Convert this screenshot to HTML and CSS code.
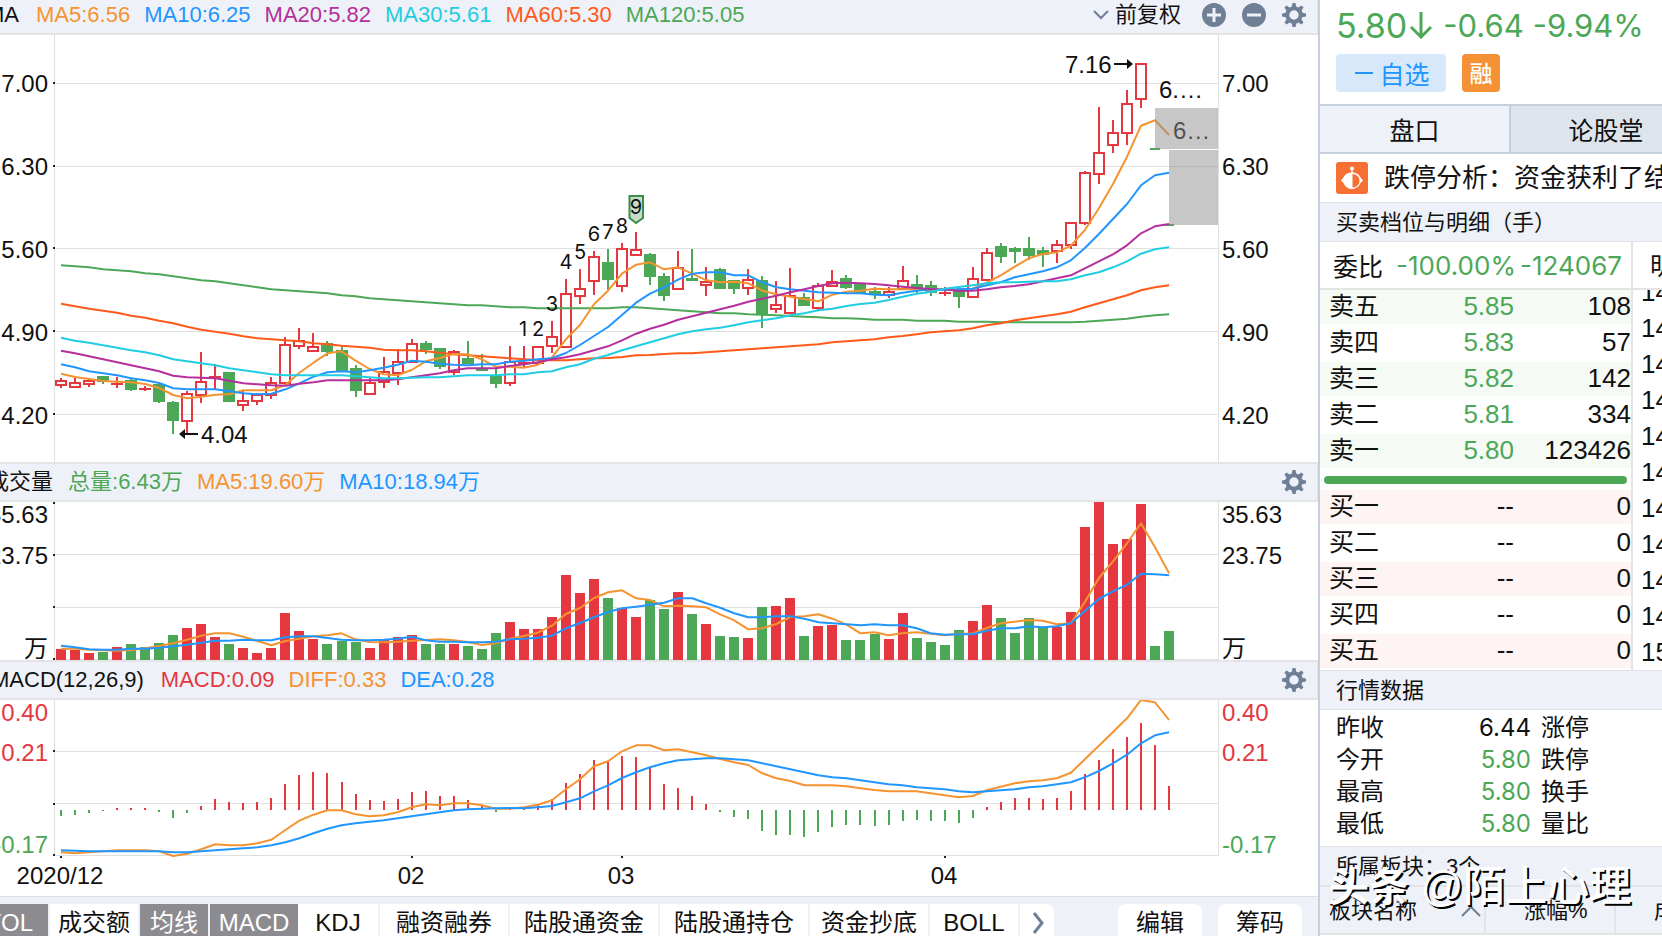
FILE: index.html
```html
<!DOCTYPE html>
<html lang="zh-CN">
<head>
<meta charset="utf-8">
<title>5.80 -9.94% 行情</title>
<link rel="stylesheet" href="styles.css">
</head>
<body>
<svg class="defs" aria-hidden="true">
  <symbol id="gear" viewBox="-12 -12 24 24">
    <circle r="6.7" fill="none" stroke="#6e7f96" stroke-width="4"/>
    <g fill="#6e7f96">
      <path id="tooth" d="M-2.3-8L-1.5-12H1.5L2.3-8Z"/>
      <use href="#tooth" transform="rotate(45)"/>
      <use href="#tooth" transform="rotate(90)"/>
      <use href="#tooth" transform="rotate(135)"/>
      <use href="#tooth" transform="rotate(180)"/>
      <use href="#tooth" transform="rotate(225)"/>
      <use href="#tooth" transform="rotate(270)"/>
      <use href="#tooth" transform="rotate(315)"/>
    </g>
  </symbol>
</svg>
<div class="app">
  <main class="charts">
    <header class="bar bar-top">
      <span class="name name-ma">MA</span>
      <span class="orange">MA5:6.56</span>
      <span class="blue">MA10:6.25</span>
      <span class="purple">MA20:5.82</span>
      <span class="cyan">MA30:5.61</span>
      <span class="deep">MA60:5.30</span>
      <span class="green">MA120:5.05</span>
      <div class="tools">
        <button class="adjust" type="button">
          <svg width="18" height="12" viewBox="0 0 18 12"><path d="M2 2L9 9L16 2" fill="none" stroke="#6e7f96" stroke-width="2"/></svg>
          <span>前复权</span>
        </button>
        <button type="button" aria-label="放大"><svg width="24" height="24" viewBox="0 0 24 24"><circle cx="12" cy="12" r="12" fill="#6e7f96"/><path d="M5 12H19M12 5V19" stroke="#eef1f7" stroke-width="3"/></svg></button>
        <button type="button" aria-label="缩小"><svg width="24" height="24" viewBox="0 0 24 24"><circle cx="12" cy="12" r="12" fill="#6e7f96"/><path d="M5 12H19" stroke="#eef1f7" stroke-width="3"/></svg></button>
        <button type="button" aria-label="设置"><svg width="24" height="24"><use href="#gear"/></svg></button>
      </div>
    </header>

    <svg class="plot" viewBox="0 35 1318 427">
      <path class="grid" d="M54 83.5H1218M54 166.5H1218M54 248.5H1218M54 331.5H1218M54 414.5H1218M54.5 35V462M1218.5 35V462"/>
      <path class="tick" d="M53 83H55M53 166H55M53 248H55M53 331H55M53 414H55"/>
      <g class="axis end"><text x="48" y="92">7.00</text><text x="48" y="175">6.30</text><text x="48" y="258">5.60</text><text x="48" y="341">4.90</text><text x="48" y="424">4.20</text></g>
      <g class="axis"><text x="1222" y="92">7.00</text><text x="1222" y="175">6.30</text><text x="1222" y="258">5.60</text><text x="1222" y="341">4.90</text><text x="1222" y="424">4.20</text></g>
      <g id="candles"></g>
      <g id="averages"></g>
      <path class="badge" d="M629.500 196H643V218L636 223L629.500 218Z"/>
      <g class="count">
        <text x="523" y="336">1</text><text x="538" y="336">2</text><text x="552" y="311">3</text><text x="566" y="269">4</text><text x="580" y="259">5</text><text x="594" y="241">6</text><text x="608" y="239">7</text><text x="622" y="233">8</text><text x="636" y="214">9</text>
      </g>
      <g class="axis">
        <text x="201" y="443">4.04</text><text x="1065" y="73">7.16</text>
        <text x="1159" y="98">6.…</text><text x="1173" y="139">6…</text>
      </g>
      <path d="M198 434H184M1114 64H1128" stroke="#111" stroke-width="2"/>
      <path d="M179 434L185 429V439ZM1133 64L1127 59V69Z" fill="#111"/>
      <path class="gap" d="M1155 108H1218V149H1155ZM1169 150H1218V225H1169Z"/>
    </svg>

    <header class="bar">
      <span class="name name-vol">成交量</span>
      <span class="green">总量:6.43万</span>
      <span class="orange">MA5:19.60万</span>
      <span class="blue">MA10:18.94万</span>
      <div class="tools"><button type="button" aria-label="设置"><svg width="24" height="24"><use href="#gear"/></svg></button></div>
    </header>

    <svg class="plot" viewBox="0 502 1318 158">
      <path class="grid" d="M54 554.5H1218M54 607.5H1218M54 659.5H1218M54.5 502V660M1218.5 502V660"/>
      <path class="tick" d="M53 503H55M53 555H55M53 607H55M53 659H55"/>
      <g class="axis end"><text x="48" y="523">35.63</text><text x="48" y="564">23.75</text><text x="48" y="657">万</text></g>
      <g class="axis"><text x="1222" y="523">35.63</text><text x="1222" y="564">23.75</text><text x="1222" y="657">万</text></g>
      <g id="volume"></g>
    </svg>

    <header class="bar">
      <span class="name name-macd">MACD(12,26,9)</span>
      <span class="red">MACD:0.09</span>
      <span class="orange">DIFF:0.33</span>
      <span class="blue">DEA:0.28</span>
      <div class="tools"><button type="button" aria-label="设置"><svg width="24" height="24"><use href="#gear"/></svg></button></div>
    </header>

    <svg class="plot" viewBox="0 700 1318 196">
      <path class="grid" d="M54 751.5H1218M54 803.5H1218M54 855.5H1218M54.5 700V856M1218.5 700V856"/>
      <path class="tick" d="M53 751H55M53 804H55M53 855H55M60 857H62M411 857H413M621 857H623M944 857H946"/>
      <g class="axis end up"><text x="48" y="721">0.40</text><text x="48" y="761">0.21</text></g>
      <g class="axis up"><text x="1222" y="721">0.40</text><text x="1222" y="761">0.21</text></g>
      <g class="axis down"><text x="48" y="853" class="end">-0.17</text><text x="1222" y="853">-0.17</text></g>
      <g id="macd"></g>
      <g class="axis mid"><text x="60" y="884">2020/12</text><text x="411" y="884">02</text><text x="621" y="884">03</text><text x="944" y="884">04</text></g>
    </svg>

    <nav class="indicators">
      <button type="button" class="on w-vol">VOL</button>
      <button type="button" class="w-88">成交额</button>
      <button type="button" class="on w-68">均线</button>
      <button type="button" class="on w-88">MACD</button>
      <button type="button" class="w-80 joined">KDJ</button>
      <button type="button" class="w-128">融资融券</button>
      <button type="button" class="w-148">陆股通资金</button>
      <button type="button" class="w-148">陆股通持仓</button>
      <button type="button" class="w-118">资金抄底</button>
      <button type="button" class="w-88">BOLL</button>
      <button type="button" class="more" aria-label="更多"><svg width="12" height="24" viewBox="0 0 12 24"><path d="M2 2L10 12L2 22" fill="none" stroke="#6e7f96" stroke-width="3"/></svg></button>
      <button type="button" class="pill push">编辑</button>
      <button type="button" class="pill">筹码</button>
    </nav>
  </main>

  <aside class="quote">
    <section class="price">
      <div class="figures">
        <strong>5.80</strong>
        <svg width="24" height="28" viewBox="0 0 24 28"><path d="M12 1V26M2 16L12 26L22 16" fill="none" stroke="#4ca757" stroke-width="3"/></svg>
        <span class="change">-0.64</span>
        <span>-9.94%</span>
      </div>
      <div class="tags">
        <button type="button" class="watch"><svg width="18" height="4"><path d="M0 2H18" stroke="#2196ff" stroke-width="2"/></svg>自选</button>
        <span class="margin">融</span>
      </div>
    </section>
    <div class="tabs">
      <button type="button" class="active">盘口</button>
      <button type="button">论股堂</button>
    </div>
    <a class="news" href="#news">
      <svg width="32" height="32" viewBox="0 0 32 32"><rect width="32" height="32" rx="3" fill="#f66f33"/><circle cx="16" cy="6.500" r="2" fill="#fff"/><path d="M16 7V12" stroke="#fff" stroke-width="1.500"/><path d="M16 10.500C20 10.500 23 12 24.500 15.500L27 18.500L24.500 21C23 24.500 20 27 16 27C12 27 9 24.500 7.500 21L5 18.500L7.500 15.500C9 12 12 10.500 16 10.500Z" fill="#fff"/><path d="M16.500 12C20.500 12 23.500 15 23.500 18.700C23.500 22.500 20.500 25.500 16.500 25.500Z" fill="#f66f33"/></svg>
      <span>跌停分析：资金获利了结</span>
    </a>
    <h2>买卖档位与明细（手）</h2>
    <div class="book">
      <div class="depth">
        <div class="ratio"><span>委比</span><b>-100.00%</b><b>-124067</b></div>
        <table class="asks">
          <tr><th>卖五</th><td>5.85</td><td>108</td></tr>
          <tr><th>卖四</th><td>5.83</td><td>57</td></tr>
          <tr><th>卖三</th><td>5.82</td><td>142</td></tr>
          <tr><th>卖二</th><td>5.81</td><td>334</td></tr>
          <tr><th>卖一</th><td>5.80</td><td>123426</td></tr>
        </table>
        <div class="balance"></div>
        <table class="bids">
          <tr><th>买一</th><td>--</td><td>0</td></tr>
          <tr><th>买二</th><td>--</td><td>0</td></tr>
          <tr><th>买三</th><td>--</td><td>0</td></tr>
          <tr><th>买四</th><td>--</td><td>0</td></tr>
          <tr><th>买五</th><td>--</td><td>0</td></tr>
        </table>
      </div>
      <div class="deals">
        <div class="deals-head">明</div>
        <ol><li>14</li><li>14</li><li>14</li><li>14</li><li>14</li><li>14</li><li>14</li><li>14</li><li>14</li><li>14</li><li>15</li></ol>
      </div>
    </div>
    <h2>行情数据</h2>
    <dl class="stats">
      <dt>昨收</dt><dd class="flat">6.44</dd><dt>涨停</dt>
      <dt>今开</dt><dd>5.80</dd><dt>跌停</dt>
      <dt>最高</dt><dd>5.80</dd><dt>换手</dt>
      <dt>最低</dt><dd>5.80</dd><dt>量比</dt>
    </dl>
    <div class="sector">
      <h2>所属板块：3个</h2>
      <div class="columns">
        <span class="col-name">板块名称<svg width="20" height="12" viewBox="0 0 20 12"><path d="M1 11L10 2L19 11" fill="none" stroke="#6e7f96" stroke-width="2"/></svg></span>
        <span class="col-pct">涨幅%</span>
        <span class="col-last">成</span>
      </div>
      <div class="watermark"><b>头条</b> @陌上心理</div>
    </div>
  </aside>
</div>
<script src="chart.js"></script>
</body>
</html>
```

FILE: styles.css
```css
* { box-sizing: border-box; }

body {
  margin: 0;
  height: 100vh;
  overflow: hidden;
  background: #fff;
  color: #111;
  font-family: "Liberation Sans", "Noto Sans CJK SC", sans-serif;
  font-size: 22px;
}

button {
  margin: 0;
  padding: 0;
  border: 0;
  background: none;
  color: inherit;
  font: inherit;
  white-space: nowrap;
}

svg { display: block; }
.defs { position: absolute; width: 0; height: 0; }

.app {
  display: grid;
  grid-template-columns: minmax(0, 1fr) 342px;
  height: 100%;
}

.charts { min-width: 0; border-right: 2px solid #c6d0dc; overflow: hidden; }

/* Indicator header bars */
.bar {
  display: flex;
  align-items: center;
  gap: 14px;
  height: 40px;
  background: #eef1f7;
  border-top: 2px solid #e4e4e6;
  border-bottom: 2px solid #e4e4e6;
  border-right: 1px solid #e4e4e6;
  line-height: 32px;
  white-space: nowrap;
}
.bar-top { margin-top: -5px; }
.name { margin-right: 3px; }
.name-ma { margin-left: -14px; }
.bar .name-vol { margin-left: -13px; margin-right: 1px; }
.name-macd { margin-left: -9px; }
.tools { display: flex; align-items: center; gap: 16px; margin-left: auto; padding-right: 11px; }
.adjust { display: flex; align-items: center; gap: 5px; margin-right: 5px; }
.adjust span { line-height: 28px; }

.orange { color: #f59331; }
.blue { color: #2196ff; }
.purple { color: #b5309c; }
.cyan { color: #20cde2; }
.deep { color: #ff5a1a; }
.green { color: #4ca757; }
.red { color: #e4373f; }

/* Plots */
.plot { width: 100%; height: auto; }
.grid { stroke: #e0e0e0; fill: none; }
.tick { stroke: #222; stroke-width: 2; }
.axis { font-size: 24px; fill: #111; }
.end { text-anchor: end; }
.mid { text-anchor: middle; }
.up { fill: #e4373f; }
.down { fill: #4ca757; }
.count { font: 20px Inter, sans-serif; text-anchor: middle; fill: #111; }
.badge { fill: #c5dccb; stroke: #3b8f4b; stroke-width: 2; }
.gap { fill: #909090; fill-opacity: .5; }
.line { fill: none; stroke-width: 2; stroke-linejoin: round; }

/* Indicator switcher */
.indicators {
  display: flex;
  gap: 2px;
  height: 60px;
  padding: 7px 16px 0 0;
  background: #eef1f7;
  border-top: 1px solid #dcdfe4;
  font-size: 24px;
}
.indicators button { flex: none; height: 38px; background: #fff; line-height: 38px; }
.indicators .on { background: #8c8c90; color: #fff; }
.indicators .w-vol { width: 88px; margin-left: -40px; padding-left: 10px; }
.indicators .joined { margin-left: -2px; }
.w-68 { width: 68px; }
.w-80 { width: 80px; }
.w-88 { width: 88px; }
.w-118 { width: 118px; }
.w-128 { width: 128px; }
.w-148 { width: 148px; }
.indicators .more { width: 34px; padding-left: 12px; border-radius: 0 8px 8px 0; }
.indicators .pill { width: 84px; border-radius: 8px; }
.indicators .push { margin-left: auto; margin-right: 14px; }

/* Quote panel */
.quote { min-width: 0; overflow: hidden; }
.price { height: 106px; padding: 4px 0 0 16px; border-bottom: 2px solid #c6d0dc; font-family: Inter, sans-serif; }
.figures { display: flex; align-items: center; height: 42px; color: #4ca757; font-size: 31px; white-space: nowrap; }
.figures strong { font-size: 34px; font-weight: 400; }
.figures svg { margin-left: 2px; margin-right: 10px; }
.change { margin-right: 9px; }
.tags { display: flex; gap: 16px; padding-top: 8px; }
.watch {
  display: flex;
  align-items: center;
  justify-content: center;
  gap: 6px;
  width: 110px;
  height: 38px;
  padding-left: 3px;
  border-radius: 4px;
  background: #d7e8fb;
  color: #2196ff;
  font-family: "Noto Sans CJK SC", sans-serif;
  font-size: 25px;
  line-height: 38px;
}
.margin {
  width: 38px;
  height: 38px;
  border-radius: 4px;
  background: #f59236;
  color: #fff;
  font: 500 23px/36px "Noto Sans CJK SC", sans-serif;
  text-align: center;
}

.tabs { display: grid; grid-template-columns: 191px 190px; height: 48px; border-bottom: 2px solid #c6d0dc; }
.tabs button { background: #dde4ec; font-size: 25px; }
.tabs .active { background: #eef1f7; border-right: 2px solid #c6d0dc; }

.news { display: flex; align-items: center; gap: 16px; height: 48px; padding-left: 16px; color: #111; font-size: 26px; line-height: 36px; text-decoration: none; white-space: nowrap; }
.news svg { flex: none; }

h2 {
  margin: 0;
  height: 40px;
  padding-left: 16px;
  background: #eef1f7;
  border-top: 1px solid #dfe2e6;
  border-bottom: 1px solid #dfe2e6;
  font-size: 22px;
  font-weight: 400;
  line-height: 40px;
}

.book { display: grid; grid-template-columns: 313px 1fr; }
.depth { border-right: 2px solid #e4e4e6; }
.ratio {
  display: flex;
  align-items: center;
  justify-content: space-between;
  height: 48px;
  padding: 0 9px 0 13px;
  border-bottom: 2px solid #e4e4e6;
  font-size: 25px;
}
.ratio b { color: #4ca757; font-family: Inter, sans-serif; font-size: 26px; font-weight: 400; }
.ratio span { margin-right: 9px; }

.book table { width: 100%; border-collapse: collapse; table-layout: fixed; font-size: 26px; }
.book tr { height: 36px; }
.book th, .book td { padding: 0 0 4px; line-height: 32px; text-align: right; font-weight: 400; }
.book th { width: 90px; padding-left: 9px; text-align: left; font-size: 25px; }
.book td:nth-child(2) { width: 104px; }
.book td:last-child { padding-right: 0; }
.asks td:nth-child(2) { color: #4ca757; }
.asks tr:nth-child(odd) { background: linear-gradient(#f5faf5 34px, #fff 34px); }
.bids tr:nth-child(odd) { background: linear-gradient(#fef4f3 34px, #fff 34px); }
.balance { height: 8px; margin: 6px 4px; border-radius: 4px; background: #4ca757; }

.deals { overflow: hidden; }
.deals-head { height: 48px; padding-left: 17px; border-bottom: 2px solid #e4e4e6; font-size: 25px; line-height: 48px; }
.deals ol { height: 380px; margin: 0; padding: 0 0 0 8px; overflow: hidden; list-style: none; font-size: 26px; }
.deals li { height: 36px; line-height: 36px; }
.deals li:first-child { height: 20px; line-height: 4px; }

.stats {
  display: grid;
  grid-template-columns: 110px 75px 1fr;
  column-gap: 10px;
  margin: 0;
  padding: 2px 0 6px 16px;
  font-size: 24px;
  line-height: 32px;
}
.stats dd { margin: 0; color: #4ca757; font-family: Inter, sans-serif; font-size: 24px; text-align: right; }
.stats .flat { color: #111; }

.sector { position: relative; }
.columns { display: grid; grid-template-columns: 166px 130px 60px; height: 49px; border-top: 1px solid #e4e4e6; border-bottom: 2px solid #e4e4e6; background: #eef1f7; line-height: 48px; }
.columns span { border-right: 2px solid #e4e4e6; white-space: nowrap; }
.col-name { display: flex; align-items: center; justify-content: space-between; padding: 0 3px 0 9px; }
.col-pct { padding-left: 38px; }
.col-last { padding-left: 38px; }
.watermark {
  position: absolute;
  left: 9px;
  top: 13px;
  color: #fff;
  font-size: 42px;
  font-weight: 500;
  line-height: 56px;
  text-shadow: 2px 2px 0 #000;
  white-space: nowrap;
}
.watermark b { font-size: 40px; font-weight: 700; }
```

FILE: chart.js
```js
// Vertical values are stored in thirds of a drawing unit.
const UNIT = 3;
const FIRST = 61;
const STEP = 14.026;
const RED = '#e4373f';
const GREEN = '#4ca757';
const NS = 'http://www.w3.org/2000/svg';

const at = i => FIRST + i * STEP;
const list = s => s.trim().split(/\s+/).map(Number);

function add(parent, tag, attrs) {
  const el = document.createElementNS(NS, tag);
  for (const k in attrs) el.setAttribute(k, attrs[k]);
  parent.appendChild(el);
}
function line(parent, color, ys, base) {
  const points = list(ys).map((y, i) => at(i).toFixed(1) + ',' + (base + y / UNIT).toFixed(1)).join(' ');
  add(parent, 'polyline', { class: 'line', points, stroke: color });
}

// colour, high, body top, body bottom, low
const candles = `r 1133 1142 1156 1165|r 1130 1148 1160 1165|r 1135 1142 1153 1162|g 1128 1128 1145 1151|r 1132 1148 1152 1165
g 1138 1140 1170 1172|r 1158 1165 1168 1173|g 1150 1152 1206 1208|g 1204 1207 1262 1301|r 1174 1182 1263 1300
r 1056 1146 1185 1208|r 1093 1129 1132 1166|g 1117 1117 1206 1206|r 1172 1202 1216 1232|r 1178 1185 1203 1215
r 1132 1148 1184 1196|r 1011 1034 1150 1150|r 984 1022 1039 1046|r 999 1041 1054 1055|g 1024 1030 1056 1067
g 1036 1050 1117 1117|g 1095 1105 1172 1190|r 1130 1149 1183 1184|r 1071 1115 1147 1163|r 1047 1085 1119 1154
r 1018 1032 1086 1087|g 1023 1029 1049 1061|g 1045 1045 1101 1106|r 1050 1055 1117 1126|g 1023 1074 1092 1092
g 1062 1107 1113 1113|g 1108 1128 1151 1163|r 1038 1085 1149 1157|r 1038 1085 1088 1100|r 1040 1040 1089 1096
r 963 1010 1039 1058|r 838 882 1041 1043|r 808 867 888 911|r 753 771 843 884|g 748 787 839 870
r 730 747 858 875|r 696 749 766 766|g 760 763 831 855|g 820 829 888 902|r 753 803 867 868
g 747 834 842 842|r 802 845 856 887|g 804 807 866 866|g 841 841 866 881|r 807 841 865 885
g 829 840 943 983|r 843 914 928 938|r 804 888 939 940|g 880 891 917 917|r 850 857 925 930
r 810 845 859 859|g 825 833 863 866|g 848 850 880 880|g 862 873 886 896|r 862 875 884 893
r 798 842 866 867|g 825 851 866 880|g 843 855 878 887|r 862 875 878 887|g 860 870 891 923
r 801 836 890 892|r 744 758 841 842|g 729 738 770 788|g 742 745 755 788|g 711 744 768 779
g 741 750 765 800|r 720 734 752 788|r 667 668 734 746|r 513 518 669 674|r 321 458 521 551
r 360 398 436 458|r 270 311 400 434|r 190 192 298 323|g 444 444 450 450|g 672 672 678 678`
  .split(/[|\n]/).map(s => s.split(' '));

const root = document.getElementById('candles');
candles.forEach(([c, ...v], i) => {
  const x = Math.round(at(i));
  const [high, top, bottom, low] = v.map(n => Math.round(n / UNIT));
  const color = c === 'r' ? RED : GREEN;
  if (c === 'r') {
    if (top > high) add(root, 'rect', { x: x - 1, y: high, width: 2, height: top - high, fill: color });
    if (low > bottom) add(root, 'rect', { x: x - 1, y: bottom, width: 2, height: low - bottom, fill: color });
    if (bottom - top < 2) add(root, 'rect', { x: x - 6, y: top, width: 12, height: 2, fill: color });
    else add(root, 'rect', { x: x - 5, y: top, width: 10, height: bottom - top, fill: 'none', stroke: color, 'stroke-width': 2 });
  } else {
    const half = i > 77 ? 5 : 6;
    add(root, 'rect', { x: x - 1, y: high, width: 2, height: low - high, fill: color });
    add(root, 'rect', { x: x - half, y: top, width: half * 2, height: Math.max(bottom - top, 2), fill: color });
  }
});

const averages = document.getElementById('averages');
line(averages, GREEN, `796 799 802 808 811 814 820 823 829 835 841 844 850 856 862 868 871 874 877 880 886 889 895 898 901 904 907 910 913 916 916 919 922 922 925 925 925 925 925 925 922 922 925 928 931 934 937 940 940 943 944 946 948 950 952 955 955 956 959 959 959 962 962 962 965 965 965 967 967 967 967 967 967 965 962 959 956 950 946 943`, 0);
line(averages, '#ff5a1a', `911 919 926 932 938 947 953 962 970 980 989 995 1001 1009 1015 1018 1021 1024 1030 1033 1037 1040 1043 1049 1051 1051 1054 1058 1063 1066 1069 1072 1075 1078 1080 1081 1081 1078 1075 1074 1071 1066 1065 1062 1060 1060 1057 1054 1051 1048 1045 1042 1039 1036 1033 1027 1024 1021 1018 1012 1008 1003 997 994 991 985 976 970 961 955 949 943 935 922 910 898 886 871 862 856`, 0);
line(averages, '#f59331', `1121 1131 1137 1143 1145 1147 1152 1164 1185 1195 1190 1184 1183 1171 1171 1171 1155 1118 1088 1060 1054 1082 1107 1123 1126 1110 1084 1074 1062 1063 1078 1100 1100 1103 1094 1072 1018 975 913 872 821 794 787 808 802 821 841 847 845 850 872 883 890 897 904 884 875 872 866 868 868 868 870 870 868 866 848 826 800 775 762 757 737 690 625 552 470 377 361 405`, 0);
line(averages, '#2196ff', `1093 1102 1114 1120 1126 1135 1141 1149 1165 1168 1168 1168 1174 1180 1183 1181 1168 1150 1130 1117 1114 1117 1111 1103 1094 1082 1085 1091 1094 1096 1093 1093 1085 1082 1078 1075 1059 1035 1008 981 945 908 881 862 839 821 817 817 826 826 847 862 868 872 877 878 880 880 884 886 878 872 868 870 868 866 856 847 832 823 814 802 781 744 702 657 612 556 526 518`, 0);
line(averages, '#b5309c', `1052 1060 1069 1078 1087 1096 1105 1114 1127 1132 1133 1135 1142 1150 1153 1156 1157 1151 1147 1141 1141 1141 1141 1141 1138 1132 1126 1120 1111 1105 1105 1105 1098 1093 1087 1078 1072 1063 1051 1039 1021 1001 986 974 959 949 938 928 917 905 896 887 877 868 858 850 848 850 852 856 860 864 867 868 873 872 868 862 858 853 844 835 826 805 784 763 736 700 679 672`, 0);
line(averages, '#20cde2', `1013 1022 1028 1036 1043 1051 1057 1066 1078 1084 1090 1096 1105 1111 1117 1123 1126 1126 1126 1126 1126 1129 1132 1135 1135 1133 1132 1132 1129 1126 1126 1126 1123 1123 1117 1114 1102 1093 1076 1065 1051 1039 1027 1015 1003 994 988 983 976 967 961 955 946 940 931 926 918 912 908 900 890 881 876 866 861 856 850 847 847 845 844 844 838 826 817 802 784 761 748 742`, 0);

// Volume bars hang from the panel origin at y = 460
const volume = document.getElementById('volume');
const falling = new Set([3, 5, 6, 7, 8, 12, 19, 20, 21, 26, 27, 29, 30, 31, 39, 42, 43, 45, 47, 48, 50, 53, 56, 57, 58, 61, 62, 63, 64, 67, 68, 69, 70, 78, 79]);
list(`568 571 579 575 562 552 562 550 525 504 492 531 552 564 579 564 459 513 537 552 544 546 564 540 531 525 552 552 552 558 567 519 486 507 507 471 345 399 357 414 444 471 420 447 396 462 492 528 531 534 441 438 414 528 498 495 540 540 522 537 459 534 546 555 510 483 435 474 519 474 501 501 456 201 126 252 237 132 558 513`)
  .forEach((v, i) => {
    const y = Math.round(460 + v / UNIT);
    add(volume, 'rect', { x: Math.round(at(i)) - 5, y, width: 10, height: 660 - y, fill: falling.has(i) ? GREEN : RED });
  });
line(volume, '#f59331', `566 566 569 571 572 570 565 558 550 539 527 520 520 530 543 556 543 536 529 526 520 538 546 547 545 542 540 538 541 546 555 550 536 528 518 497 462 444 414 397 391 415 420 439 437 439 442 463 481 508 505 492 471 469 463 476 494 520 517 526 520 517 521 526 521 521 504 490 485 480 482 493 490 426 354 304 250 190 262 340`, 460);
line(volume, '#2196ff', `557 562 568 569 569 566 566 563 559 554 548 542 542 539 541 541 532 529 529 534 539 541 541 539 536 530 541 545 545 547 547 545 538 536 533 527 505 489 472 456 445 440 434 428 415 415 430 443 460 472 472 469 469 476 487 490 493 496 493 496 496 505 520 524 523 523 512 505 505 499 502 499 490 453 417 394 374 341 343 346`, 460);

// MACD bars grow from the zero line at y = 810
const macd = document.getElementById('macd');
list(`467 464 458 453 444 444 444 456 473 459 438 417 426 429 426 414 372 345 336 339 366 402 420 423 417 396 393 408 408 420 435 456 448 446 435 418 369 342 300 306 288 291 324 372 384 408 432 456 470 477 513 525 525 530 516 501 495 495 498 495 483 480 483 483 489 473 441 426 414 414 417 414 393 342 300 267 231 189 255 378`)
  .forEach((v, i) => {
    const y = Math.round(660 + v / UNIT);
    add(macd, 'rect', { x: Math.round(at(i)) - 1, y: Math.min(y, 810), width: 2, height: Math.max(Math.abs(y - 810), 1), fill: v > 450 ? GREEN : RED });
  });
line(macd, '#f59331', `577 580 577 574 571 571 571 574 588 581 568 553 556 556 550 539 510 482 464 451 451 463 469 466 457 442 433 436 430 430 436 446 446 442 434 421 388 358 319 304 274 256 256 271 268 277 286 297 307 315 340 355 363 376 376 376 379 385 390 394 394 394 400 406 412 408 391 380 370 364 361 355 338 298 257 216 175 120 127 180`, 660);
line(macd, '#2196ff', `571 572 574 574 574 574 574 574 577 577 574 571 568 565 562 556 547 535 520 506 496 490 485 481 475 469 463 457 451 448 446 445 444 445 442 438 427 415 394 376 354 337 322 310 301 298 295 295 298 301 310 319 328 337 346 352 355 361 367 373 376 382 385 388 394 397 394 391 388 382 379 373 367 352 333 310 284 250 226 217`, 660);
```
